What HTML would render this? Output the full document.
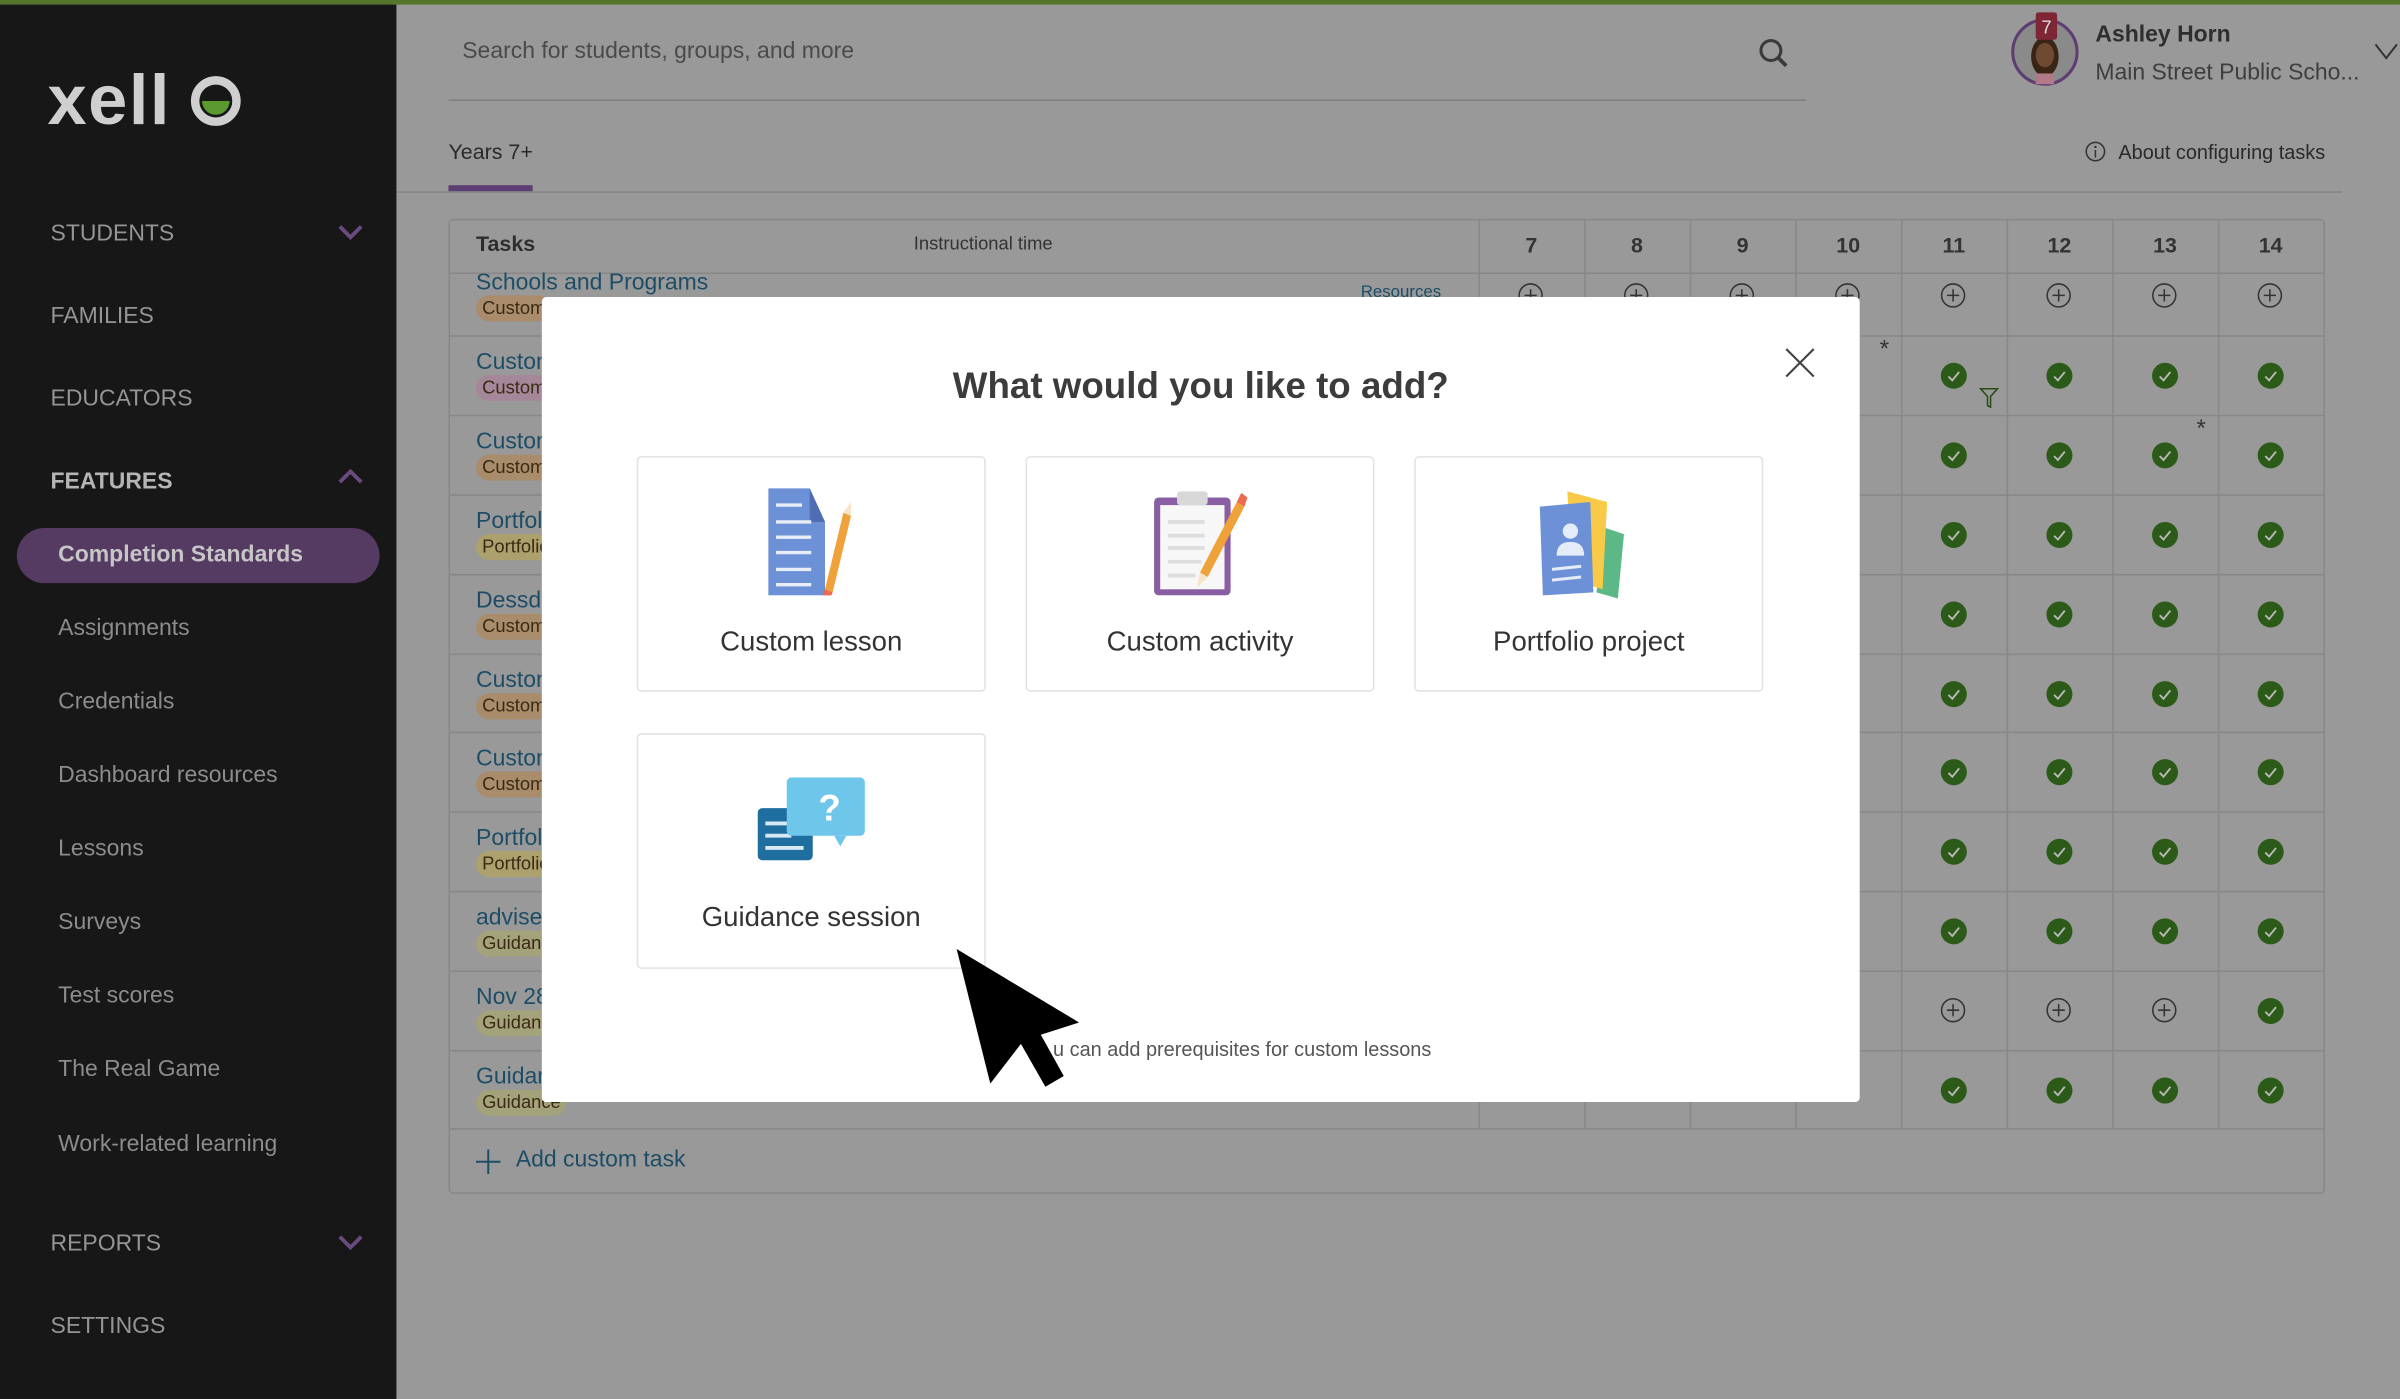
<!DOCTYPE html>
<html><head><meta charset="utf-8"><style>
*{margin:0;padding:0;box-sizing:border-box}
html,body{width:2400px;height:1399px;overflow:hidden;background:#999}
#w{position:absolute;left:0;top:0;width:1568px;height:914px;transform:scale(1.53061);transform-origin:0 0;font-family:"Liberation Sans",sans-serif;background:#999;overflow:hidden}
.a{position:absolute;white-space:nowrap}
#top{position:absolute;left:0;top:0;width:1568px;height:3px;background:#55752a}
#side{position:absolute;left:0;top:3px;width:259px;height:911px;background:#171717}
.nav{position:absolute;left:33px;font-size:15px;color:#959595}
.sub{position:absolute;left:38px;font-size:15px;color:#8c8c8c}
.chev{position:absolute;left:221px;width:16px;height:10px}
.hl{position:absolute;background:#888;height:1px}
.vl{position:absolute;background:#888;width:1px}
.task{position:absolute;left:311px;font-size:15px;color:#1d4d66}
.tag{position:absolute;left:311px;font-size:12px;color:#3a2a14;padding:1px 4px;border-radius:9px;height:17px;line-height:15px}
.ic{position:absolute;width:18px;height:18px;margin:-9px 0 0 -9px}
.chk{position:absolute;width:17px;height:17px;margin:-8.5px 0 0 -8.5px;border-radius:50%;background:#2c5a18}
.hd{position:absolute;top:152px;font-size:14px;font-weight:bold;color:#333;width:69px;text-align:center}
#modal{position:absolute;left:354px;top:194px;width:861px;height:526px;background:#fff;border-radius:3px}
.card{position:absolute;width:228px;height:154px;border:1px solid #e2e2e2;border-radius:3px;background:#fff}
.card span{position:absolute;left:0;right:0;top:110px;text-align:center;font-size:18px;color:#333}
.card svg{position:absolute}
</style></head><body><div id="w">
<div id="top"></div>
<div id="side">
<div class="a" style="left:31px;top:35px;font-size:46px;color:#cfcfcf;letter-spacing:1px;font-weight:bold">xell</div>
<svg class="a" style="left:121px;top:44px" width="40" height="38"><circle cx="20" cy="19" r="13.5" fill="none" stroke="#cfcfcf" stroke-width="5.5"/><path d="M11 19 A9 9 0 0 0 29 19 Z" fill="#5b9a2e"/></svg>
<div class="nav" style="top:141px">STUDENTS</div>
<svg class="chev" style="top:144px" viewBox="0 0 16 10"><path d="M1 1 L8 8 L15 1" stroke="#6b4a80" stroke-width="2.5" fill="none"/></svg>
<div class="nav" style="top:195px">FAMILIES</div>
<div class="nav" style="top:249px">EDUCATORS</div>
<div class="nav" style="top:303px;font-weight:bold;color:#b5b5b5">FEATURES</div>
<svg class="chev" style="top:303px" viewBox="0 0 16 10"><path d="M1 9 L8 2 L15 9" stroke="#6b4a80" stroke-width="2.5" fill="none"/></svg>
<div class="a" style="left:11px;top:342px;width:237px;height:36px;border-radius:18px;background:#553a62"></div>
<div class="a" style="left:38px;top:351px;font-size:15px;font-weight:bold;color:#c6c6c6">Completion Standards</div>
<div class="sub" style="top:399px">Assignments</div>
<div class="sub" style="top:447px">Credentials</div>
<div class="sub" style="top:495px">Dashboard resources</div>
<div class="sub" style="top:543px">Lessons</div>
<div class="sub" style="top:591px">Surveys</div>
<div class="sub" style="top:639px">Test scores</div>
<div class="sub" style="top:687px">The Real Game</div>
<div class="sub" style="top:736px">Work-related learning</div>
<div class="nav" style="top:801px">REPORTS</div>
<svg class="chev" style="top:804px" viewBox="0 0 16 10"><path d="M1 1 L8 8 L15 1" stroke="#6b4a80" stroke-width="2.5" fill="none"/></svg>
<div class="nav" style="top:855px">SETTINGS</div>
</div>
<div class="a" style="left:302px;top:25px;font-size:15px;color:#4a4a4a">Search for students, groups, and more</div>
<div class="hl" style="left:293px;top:65px;width:887px;background:#7e7e7e"></div>
<svg class="a" style="left:1148px;top:24px" width="22" height="22"><circle cx="9" cy="9" r="6.5" stroke="#3a3a3a" stroke-width="2" fill="none"/><path d="M13.5 13.5 L19 19" stroke="#3a3a3a" stroke-width="2.5"/></svg>
<svg class="a" style="left:1313px;top:8px" width="48" height="52"><circle cx="23" cy="26" r="21" fill="#8a8a8a" stroke="#5e3d72" stroke-width="2"/><ellipse cx="23" cy="29" rx="9" ry="13" fill="#3a2414"/><ellipse cx="23" cy="28" rx="6" ry="8" fill="#6e4a33"/><rect x="17" y="40" width="12" height="7" fill="#b27a88"/><rect x="17" y="0" width="14" height="18" rx="2" fill="#7e2536"/><text x="24" y="14" font-size="12" fill="#ddd" text-anchor="middle" font-family="Liberation Sans">7</text></svg>
<div class="a" style="left:1369px;top:14px;font-size:15px;font-weight:bold;color:#2e2e2e">Ashley Horn</div>
<div class="a" style="left:1369px;top:39px;font-size:15px;color:#3e3e3e">Main Street Public Scho...</div>
<svg class="a" style="left:1551px;top:28px" width="17" height="12"><path d="M1 1 L8 10 L15 1" stroke="#333" stroke-width="1.3" fill="none"/></svg>
<div class="a" style="left:293px;top:91px;font-size:14px;color:#2a2a2a">Years 7+</div>
<div class="a" style="left:293px;top:121px;width:55px;height:4px;background:#5d3e72"></div>
<div class="hl" style="left:259px;top:125px;width:1271px;background:#858585"></div>
<svg class="a" style="left:1362px;top:92px" width="14" height="14"><circle cx="7" cy="7" r="6" stroke="#333" fill="none"/><path d="M7 6 V11" stroke="#333"/><circle cx="7" cy="4" r=".8" fill="#333"/></svg>
<div class="a" style="left:1384px;top:92px;font-size:13px;color:#2a2a2a">About configuring tasks</div>
<div class="a" style="left:293px;top:143px;width:1226px;height:637px;border:1px solid #888;border-radius:3px"></div>
<div class="a" style="left:311px;top:151px;font-size:14px;font-weight:bold;color:#2e2e2e">Tasks</div>
<div class="a" style="left:597px;top:152px;font-size:12px;color:#333">Instructional time</div>
<div class="a" style="left:889px;top:185px;font-size:11px;color:#1d4d66">Resources</div>
<div id="grid"></div>
<div class="task" style="top:176px">Schools and Programs</div>
<svg class="a" style="left:310px;top:750px" width="18" height="18"><path d="M9 1 V17 M1 9 H17" stroke="#1d4d66" stroke-width="1.3"/></svg>
<div class="a" style="left:337px;top:749px;font-size:15px;color:#1d4d66">Add custom task</div>
<script>
var g='',rows=[178,219,271,323,375,427,478,530,582,634,686,737];
for(var i=0;i<rows.length;i++)g+='<div class="hl" style="left:294px;top:'+rows[i]+'px;width:1224px"></div>';
var cols=[966,1035,1104,1173,1242,1311,1380,1449];
for(var c=0;c<cols.length;c++)g+='<div class="vl" style="left:'+cols[c]+'px;top:144px;height:593px"></div>';
var hd=['7','8','9','10','11','12','13','14'];
for(var c=0;c<8;c++)g+='<div class="hd" style="left:'+(966+69*c)+'px">'+hd[c]+'</div>';
var plus='<svg viewBox="0 0 18 18" width="18" height="18"><circle cx="9" cy="9" r="7.5" stroke="#333" fill="none"/><path d="M9 5V13M5 9H13" stroke="#333"/></svg>';
for(var c=0;c<8;c++)g+='<div class="ic" style="left:'+(1000+69*c)+'px;top:193px">'+plus+'</div>';
var titles=['Custom lesson','Custom activity','Portfolio','Dessd','Custom','Custom','Portfolio','advise','Nov 28','Guidance'];
var tags=[['Custom','#a98c6b'],['Custom','#a5879a'],['Custom','#a98c6b'],['Portfolio','#aca06c'],['Custom','#a98c6b'],['Custom','#a98c6b'],['Custom','#a98c6b'],['Portfolio','#aca06c'],['Guidance','#a4a27a'],['Guidance','#a4a27a'],['Guidance','#a4a27a']];
g+='<div class="tag" style="top:193px;background:'+tags[0][1]+'">'+tags[0][0]+'</div>';
for(var r=0;r<10;r++){var y=rows[r+1];
g+='<div class="task" style="top:'+(y+9)+'px">'+titles[r]+'</div>';
g+='<div class="tag" style="top:'+(y+26)+'px;background:'+tags[r+1][1]+'">'+tags[r+1][0]+'</div>';
var cy=y+26;
for(var c=4;c<8;c++){var x=1000+69*c;
if(r==8&&c<7)g+='<div class="ic" style="left:'+x+'px;top:'+cy+'px">'+plus+'</div>';
else g+='<div class="chk" style="left:'+x+'px;top:'+cy+'px"><svg width="17" height="17"><path d="M5 9 L7.5 11.5 L12 6" stroke="#bbb" stroke-width="1.2" fill="none"/></svg></div>';}}
g+='<div class="a" style="left:1228px;top:220px;font-size:16px;color:#333">*</div><div class="a" style="left:1435px;top:272px;font-size:16px;color:#333">*</div>';
g+='<svg class="a" style="left:1293px;top:253px" width="13" height="14"><path d="M1 1H12L7.5 6V13L5.5 12V6Z" stroke="#2c4a18" fill="none"/></svg>';
document.getElementById('grid').innerHTML=g;
</script>
<div id="modal">
<div class="a" style="left:0;width:861px;text-align:center;top:45px;font-size:24px;font-weight:bold;color:#3c3c3c">What would you like to add?</div>
<svg class="a" style="left:812px;top:33px" width="20" height="20"><path d="M1 1L19 19M19 1L1 19" stroke="#444" stroke-width="1.4"/></svg>
<div class="card" style="left:62px;top:104px">
<svg style="left:83px;top:20px" width="62" height="70"><path d="M2 0H29L39 22V70H2Z" fill="#6d91d6"/><path d="M29 0L39 22H29Z" fill="#4f6db3"/><g stroke="#e8eef8" stroke-width="2.2"><path d="M7 11H24M7 22H30M7 32H30M7 42H30M7 53H30M7 63H30"/></g><path d="M56 18L44 68L39 66L51 16Z" fill="#f0a23a"/><path d="M39 66L44 68L42 73L37 71Z" fill="#ec6a4d"/><path d="M51 16L56 18L56 9Z" fill="#f6e4c4"/></svg>
<span>Custom lesson</span></div>
<div class="card" style="left:316px;top:104px">
<svg style="left:80px;top:20px" width="66" height="70"><rect x="3" y="6" width="50" height="64" rx="3" fill="#8a5ea3"/><rect x="7" y="11" width="42" height="55" fill="#f7f7f7"/><rect x="18" y="2" width="20" height="9" rx="2" fill="#d8d8d8"/><g stroke="#ddd" stroke-width="2.5"><path d="M12 22H36M12 31H36M12 39H36M12 48H34M12 57H30"/></g><path d="M62 12L38 58L33 55L57 9Z" fill="#f0a23a"/><path d="M57 9L62 12L64 6L60 3Z" fill="#ec6a4d"/><path d="M33 55L38 58L31 65Z" fill="#f6e4c4"/></svg>
<span>Custom activity</span></div>
<div class="card" style="left:570px;top:104px">
<svg style="left:78px;top:20px" width="72" height="72"><path d="M46 26L58 30L54 72L40 68Z" fill="#5cb886"/><path d="M21 2L47 9L44 66L24 60Z" fill="#f9ca48"/><path d="M3 12L36 9L38 68L5 70Z" fill="#6d91d6"/><circle cx="23" cy="28" r="5" fill="#e4ecfa"/><path d="M14 44Q14 35 23 35Q32 35 32 44Z" fill="#e4ecfa"/><path d="M11 53L30 51M11 60L30 58" stroke="#e4ecfa" stroke-width="2"/></svg>
<span>Portfolio project</span></div>
<div class="card" style="left:62px;top:285px">
<svg style="left:78px;top:28px" width="72" height="56"><rect x="0" y="20" width="36" height="34" rx="3" fill="#1e6fa0"/><g stroke="#d8e8f4" stroke-width="2.5"><path d="M5 30H22M5 38H22M5 46H30"/></g><rect x="19" y="0" width="51" height="38" rx="3" fill="#6ec6ea"/><path d="M50 38H58L54 45Z" fill="#6ec6ea"/><text x="47" y="28" font-size="24" font-weight="bold" fill="#fff" text-anchor="middle" font-family="Liberation Sans">?</text></svg>
<span style="top:109px">Guidance session</span></div>
<div class="a" style="left:334px;top:484px;font-size:13px;color:#555">u can add prerequisites for custom lessons</div>
</div>
<svg class="a" style="left:620px;top:615px" width="90" height="100"><path d="M5 5L27 93L47 67L63 95L75 88L60 61L85 53Z" fill="#000"/></svg>
</div></body></html>
